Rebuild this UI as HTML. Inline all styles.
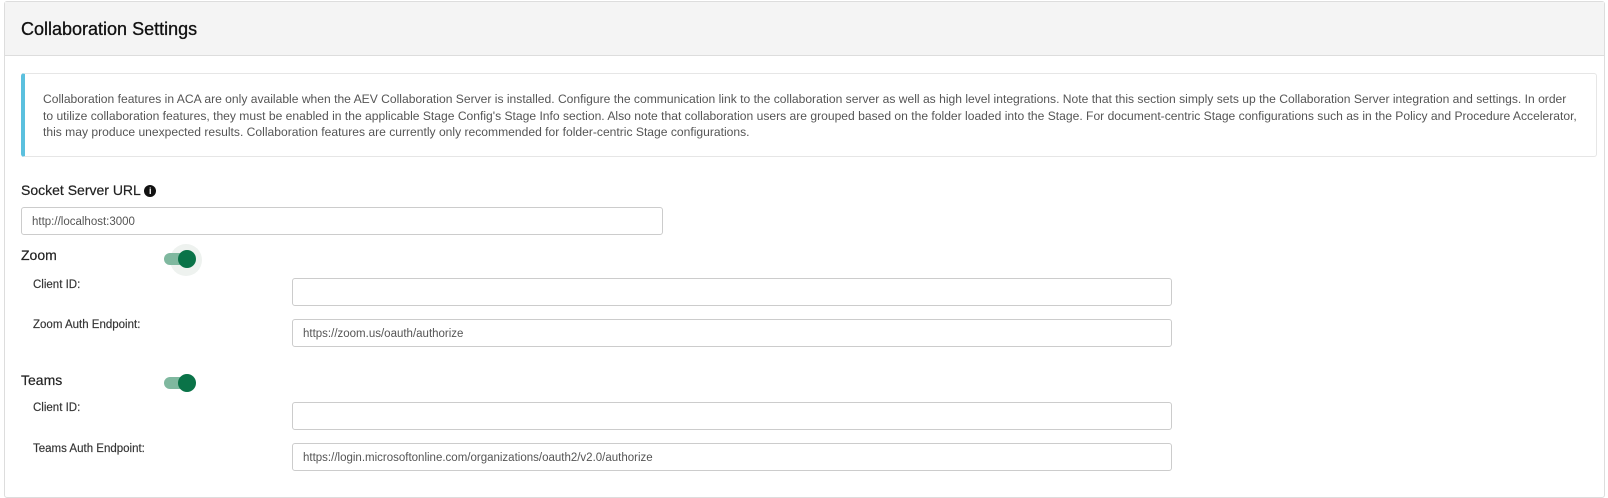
<!DOCTYPE html>
<html><head><meta charset="utf-8"><style>
*{box-sizing:border-box;margin:0;padding:0}
body{width:1608px;height:498px;background:#fff;font-family:"Liberation Sans",sans-serif;color:#333;position:relative;overflow:hidden}
.card{position:absolute;left:4px;top:1px;width:1601px;height:497px;border:1px solid #ddd;border-radius:3px}
.hdr{position:absolute;left:0;top:0;right:0;height:54px;background:#f4f4f4;border-bottom:1px solid #ddd}
.hdr h1{position:absolute;left:16px;top:17px;font-size:18px;font-weight:normal;color:#111;-webkit-text-stroke:0.3px #111}
.info{position:absolute;left:21px;top:73px;width:1576px;height:84px;border:1px solid #e6e6e6;border-left:4px solid #5bc0de;border-radius:3px;padding:17px 4px 0 18px;font-size:12.1px;line-height:16.5px;color:#555;white-space:nowrap;overflow:hidden}
.abs{position:absolute}
.lbl{font-size:14px;color:#222;-webkit-text-stroke:0.2px #222}
.sl{font-size:11.5px;color:#333;-webkit-text-stroke:0.15px #333}
.inp{position:absolute;border:1px solid #ccc;border-radius:3px;height:28px;font-size:11.5px;color:#555;padding:8px 10px;line-height:12px}
.tg{position:absolute;width:30px;height:12px;border-radius:6px;background:#7fb89f}
.tg:after{content:"";position:absolute;right:-2px;top:-3px;width:18px;height:18px;border-radius:50%;background:#0a7348}
</style></head><body>
<div class="card">
<div class="hdr"><h1>Collaboration Settings</h1></div>
</div>
<div class="info">Collaboration features in ACA are only available when the AEV Collaboration Server is installed. Configure the communication link to the collaboration server as well as high level integrations. Note that this section simply sets up the Collaboration Server integration and settings. In order<br>to utilize collaboration features, they must be enabled in the applicable Stage Config's Stage Info section. Also note that collaboration users are grouped based on the folder loaded into the Stage. For document-centric Stage configurations such as in the Policy and Procedure Accelerator,<br>this may produce unexpected results. Collaboration features are currently only recommended for folder-centric Stage configurations.</div>
<div class="abs lbl" style="left:21px;top:182px">Socket Server URL <span style="display:inline-block;width:12px;height:12px;border-radius:50%;background:#111;color:#fff;font-size:9px;line-height:12px;text-align:center;font-weight:bold;vertical-align:1px;-webkit-text-stroke:0">i</span></div>
<div class="inp" style="left:21px;top:207px;width:642px">http://localhost:3000</div>
<div class="abs lbl" style="left:21px;top:247px">Zoom</div>
<div class="abs" style="left:170px;top:244px;width:32px;height:32px;border-radius:50%;background:#eef2ef"></div>
<div class="tg" style="left:164px;top:253px"></div>
<div class="abs sl" style="left:33px;top:279px">Client ID:</div>
<div class="inp" style="left:292px;top:278px;width:880px"></div>
<div class="abs sl" style="left:33px;top:319px">Zoom Auth Endpoint:</div>
<div class="inp" style="left:292px;top:319px;width:880px">https://zoom.us/oauth/authorize</div>
<div class="abs lbl" style="left:21px;top:372px">Teams</div>
<div class="tg" style="left:164px;top:377px"></div>
<div class="abs sl" style="left:33px;top:402px">Client ID:</div>
<div class="inp" style="left:292px;top:402px;width:880px"></div>
<div class="abs sl" style="left:33px;top:443px">Teams Auth Endpoint:</div>
<div class="inp" style="left:292px;top:443px;width:880px">https://login.microsoftonline.com/organizations/oauth2/v2.0/authorize</div>
</body></html>
